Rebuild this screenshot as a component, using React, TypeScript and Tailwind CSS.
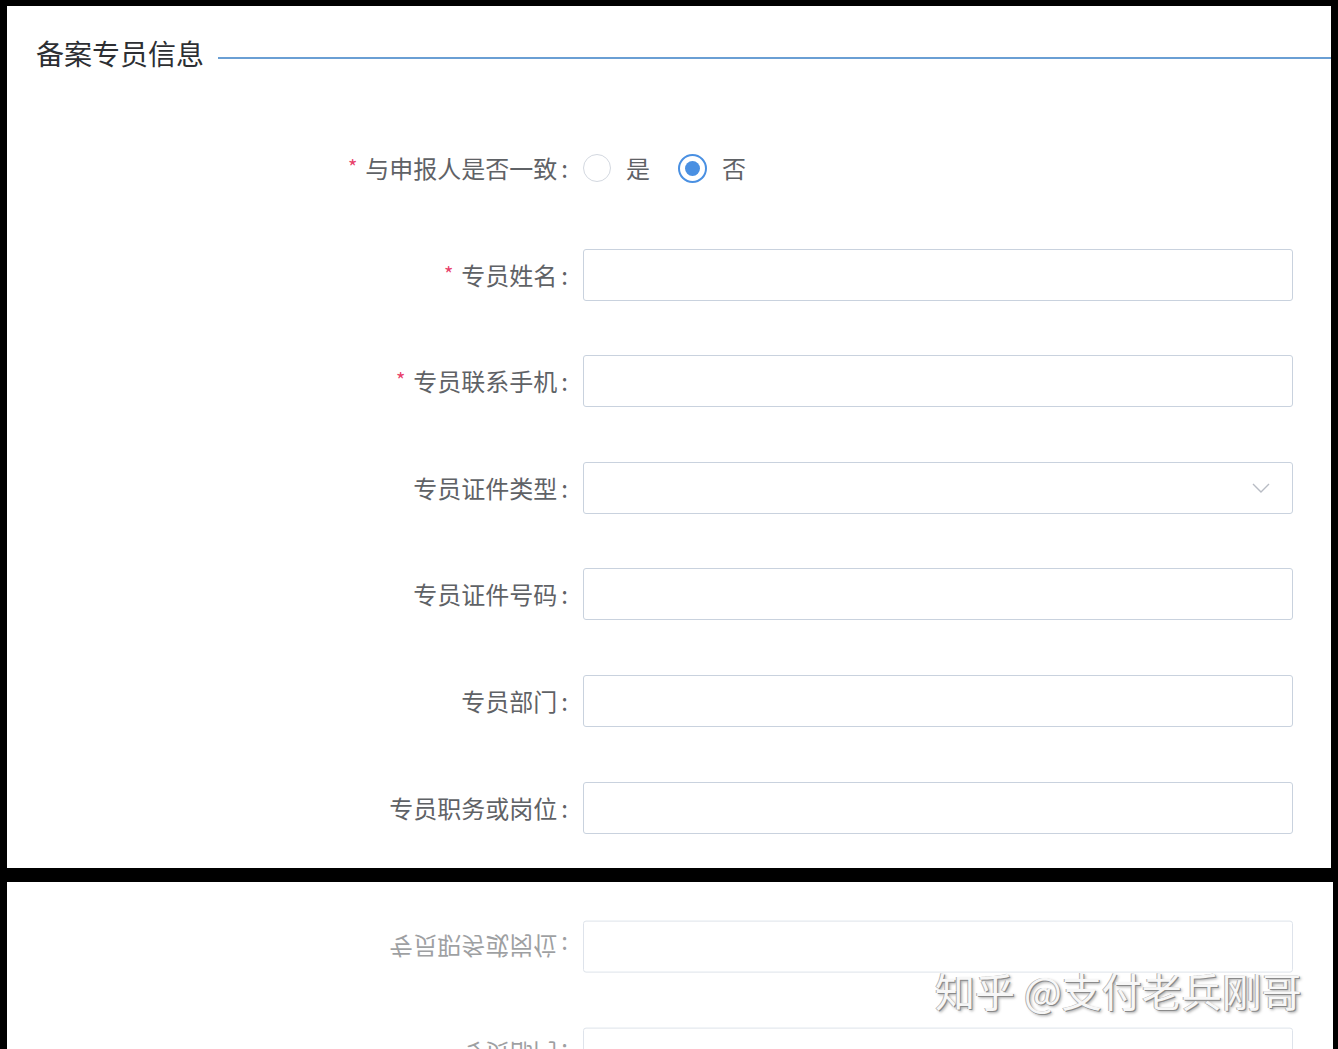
import React from "react";

const font = { fontFamily: '"Noto Sans CJK SC", "Noto Sans", sans-serif' };

function Label({ text, required }: { text: string; required?: boolean }) {
  return (
    <div className="w-[563px] shrink-0 flex items-center justify-end text-[24px] text-[#5f6266] leading-none">
      {required && <span className="text-[#e8406a] text-[20px] mr-[8px] relative top-[-1px]">*</span>}
      <span>{text}</span>
      <span className="ml-[4px] mr-[2px]">:</span>
    </div>
  );
}

function InputRow({ label, required, select }: { label: string; required?: boolean; select?: boolean }) {
  return (
    <div className="flex items-center h-[52px]">
      <Label text={label} required={required} />
      <div className="ml-[13px] w-[710px] h-[52px] border border-[#c9d2de] rounded-[3px] bg-white flex items-center justify-end pr-[22px]">
        {select && (
          <svg width="18" height="10" viewBox="0 0 18 10" fill="none">
            <path d="M1 1 L9 9 L17 1" stroke="#b8bcc4" strokeWidth="1.4" />
          </svg>
        )}
      </div>
    </div>
  );
}

export default function App() {
  return (
    <div className="w-[1338px] h-[1049px] bg-black overflow-hidden" style={font}>
      <div className="ml-[7px] pt-[6px]">
        <div className="w-[1324px] h-[862px] bg-white">
          <div className="flex items-center h-[50px] pt-[27px] box-content">
            <div className="pl-[29px] text-[28px] text-[#2d2f33] leading-none relative top-[-5px]">备案专员信息</div>
            <div className="ml-[14px] flex-1 h-[2px] bg-[#6a9fd4]" />
          </div>
          <div className="mt-[59px] flex flex-col gap-[54.6px]">
            <div className="flex items-center h-[52px]">
              <Label text="与申报人是否一致" required />
              <div className="ml-[13px] flex items-center">
                <span className="w-[28px] h-[28px] rounded-full border border-[#d3d8e0] bg-white" />
                <span className="ml-[15px] text-[24px] text-[#5f6266] leading-none">是</span>
                <span className="ml-[28px] w-[29px] h-[29px] rounded-full border-2 border-[#4a90e2] bg-white flex items-center justify-center">
                  <span className="w-[15px] h-[15px] rounded-full bg-[#4a90e2]" />
                </span>
                <span className="ml-[15px] text-[24px] text-[#5f6266] leading-none">否</span>
              </div>
            </div>
            <InputRow label="专员姓名" required />
            <InputRow label="专员联系手机" required />
            <InputRow label="专员证件类型" select />
            <InputRow label="专员证件号码" />
            <InputRow label="专员部门" />
            <InputRow label="专员职务或岗位" />
          </div>
        </div>
      </div>
      <div className="ml-[7px] mt-[14px] w-[1326px] h-[200px] bg-white relative overflow-hidden">
        <div className="-scale-y-100 opacity-60 mt-[39px]">
          <div className="flex flex-col gap-[54.6px]">
            <InputRow label="专员部门" />
            <InputRow label="专员职务或岗位" />
          </div>
        </div>
        <div className="absolute left-[928px] top-[88px] text-[40px] leading-none text-[#f7f7f7] [text-shadow:1px_1px_0_#8a8a8a,-1px_0_0_#b0b0b0,2px_2px_3px_rgba(0,0,0,0.35)] whitespace-nowrap">
          知乎 @支付老兵刚哥
        </div>
      </div>
    </div>
  );
}
